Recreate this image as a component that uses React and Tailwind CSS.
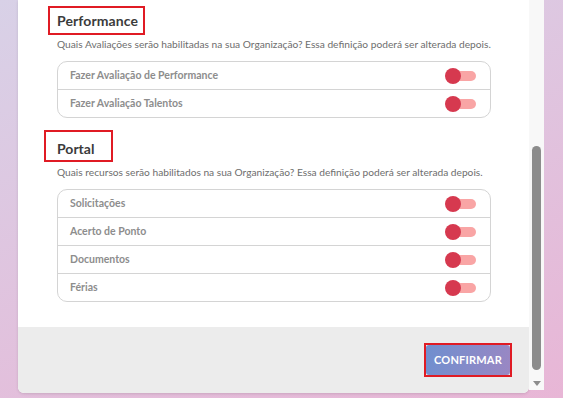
import React, { useState } from 'react';

const font = { fontFamily: 'Lato, "Open Sans", sans-serif' };

const Toggle = ({ on, onChange }) => (
  <button onClick={onChange} className="relative w-[31px] h-[16px] flex items-center shrink-0">
    <span className="absolute left-[8px] w-[23px] h-[10px] rounded-full bg-[#f9a5a5]" />
    <span className="absolute left-0 w-[16px] h-[16px] rounded-full bg-[#d6394f]" />
  </button>
);

const OptionBox = ({ items }) => {
  const [state, setState] = useState(items.map(() => false));
  return (
    <div className="mt-[10px] w-[434px] border border-[#d4d4d4] rounded-[10px]">
      {items.map((label, i) => (
        <div
          key={label}
          className={`h-[27px] flex items-center justify-between pl-[12px] pr-[14px] ${i > 0 ? 'h-[28px] border-t border-[#d4d4d4]' : ''}`}
        >
          <span className="text-[10.5px] font-bold text-[#8d8d8d]">{label}</span>
          <Toggle on={state[i]} onChange={() => setState(state.map((v, j) => (j === i ? !v : v)))} />
        </div>
      ))}
    </div>
  );
};

export default function App() {
  return (
    <div style={font} className="w-[563px] h-[398px] overflow-hidden flex bg-[linear-gradient(160deg,#d8d1e7,#e8b6d6)]">
      <div className="w-[18px] shrink-0" />
      <div className="w-[511px] h-[393px] flex flex-col bg-white rounded-b-[6px] shadow-[0_1px_3px_rgba(0,0,0,0.12)] overflow-hidden">
        <div className="flex-1 pl-[39px] pt-[6px]">
          <div className="-ml-[9px] w-[97px] h-[29px] border-2 border-[#e01b24] pl-[7px] flex items-center">
            <h3 className="text-[14px] font-bold text-[#3b3b3b] tracking-[0.1px]">Performance</h3>
          </div>
          <p className="mt-[2px] text-[10.2px] text-[#6e6e6e] leading-[14px]">
            Quais Avaliações serão habilitadas na sua Organização? Essa definição poderá ser alterada depois.
          </p>
          <OptionBox items={['Fazer Avaliação de Performance', 'Fazer Avaliação Talentos']} />

          <div className="mt-[12px] -ml-[13px] w-[69px] h-[32px] border-2 border-[#e01b24] pl-[11px] pt-[9px]">
            <h3 className="text-[14px] font-bold text-[#3b3b3b] leading-[16px]">Portal</h3>
          </div>
          <p className="mt-[3px] text-[10.2px] text-[#6e6e6e] leading-[14px]">
            Quais recursos serão habilitados na sua Organização? Essa definição poderá ser alterada depois.
          </p>
          <OptionBox items={['Solicitações', 'Acerto de Ponto', 'Documentos', 'Férias']} />
        </div>
        <div className="h-[66px] shrink-0 bg-[#ececec] flex items-center justify-end pr-[17px]">
          <div className="border-2 border-[#e01b24]">
            <button className="w-[84px] h-[30px] rounded-[3px] bg-[linear-gradient(100deg,#6f8fcf,#9a87c3)] text-white text-[11px] font-bold tracking-[0.2px]">
              CONFIRMAR
            </button>
          </div>
        </div>
      </div>
      <div className="w-[15px] h-[390px] shrink-0 bg-[#f8f8f8] flex flex-col items-center pt-[146px]">
        <div className="w-[9px] h-[224px] rounded-t-full rounded-b-full bg-[#8c8c8c]" />
        <div className="mt-[11px] w-0 h-0 border-l-[4px] border-r-[4px] border-t-[5px] border-l-transparent border-r-transparent border-t-[#8c8c8c]" />
      </div>
    </div>
  );
}
